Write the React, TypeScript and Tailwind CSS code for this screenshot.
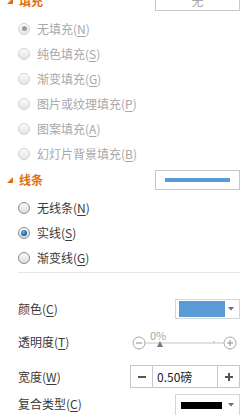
import React from "react";

type RS = "dis" | "dis-on" | "off" | "on";

function Radio({ s }: { s: RS }) {
  if (s === "dis" || s === "dis-on") {
    return (
      <div className="w-[12px] h-[12px] rounded-full border border-[#d2d2d2] bg-gradient-to-b from-[#fbfbfb] to-[#e4e4e4] flex items-center justify-center shrink-0">
        {s === "dis-on" && <div className="w-[5px] h-[5px] rounded-full bg-[#9c9c9c]" />}
      </div>
    );
  }
  return (
    <div className="w-[12px] h-[12px] rounded-full border border-[#8a8a8a] bg-gradient-to-b from-[#fdfdfd] to-[#dcdcdc] flex items-center justify-center shrink-0">
      {s === "on" && (
        <div className="w-[6px] h-[6px] rounded-full bg-[radial-gradient(circle_at_40%_35%,#5fc0f0,#0b5a99_70%,#083e6c)]" />
      )}
    </div>
  );
}

function Label({ text, k, dis }: { text: string; k: string; dis?: boolean }) {
  return (
    <span className={dis ? "text-[#a8a8a8]" : "text-[#3a3a3a]"}>
      {text}(<span className="underline underline-offset-2">{k}</span>)
    </span>
  );
}

function Header({ title, children }: { title: string; children: React.ReactNode }) {
  return (
    <div className="flex items-center h-[20px] pl-[7px] pr-[8px]">
      <svg width="6" height="6" viewBox="0 0 6 6" className="shrink-0">
        <polygon points="6,0 6,6 0,6" fill="#e46c0a" />
      </svg>
      <span className="ml-[6px] text-[12px] font-bold text-[#e46c0a]">{title}</span>
      <div className="ml-auto w-[85px] h-[20px] border border-[#c8c8c8] bg-white flex items-center justify-center">
        {children}
      </div>
    </div>
  );
}

function RadioRow({ s, text, k }: { s: RS; text: string; k: string }) {
  return (
    <div className="flex items-center h-[25px] pl-[18px] gap-[7px]">
      <Radio s={s} />
      <Label text={text} k={k} dis={s === "dis" || s === "dis-on"} />
    </div>
  );
}

function Arrow() {
  return (
    <svg width="6" height="4" viewBox="0 0 6 4" className="shrink-0">
      <polygon points="0,0 6,0 3,3.5" fill="#6b6b7a" />
    </svg>
  );
}

export default function App() {
  return (
    <div
      className="w-[248px] h-[415px] overflow-hidden bg-white text-[12px] leading-none"
      style={{ fontFamily: '"Noto Sans CJK SC", "Noto Sans", sans-serif' }}
    >
      <div className="-mt-[9px]">
        <Header title="填充">
          <span className="text-[#a8a8a8]">无</span>
        </Header>
        <div className="mt-[5px]">
          <RadioRow s="dis-on" text="无填充" k="N" />
          <RadioRow s="dis" text="纯色填充" k="S" />
          <RadioRow s="dis" text="渐变填充" k="G" />
          <RadioRow s="dis" text="图片或纹理填充" k="P" />
          <RadioRow s="dis" text="图案填充" k="A" />
          <RadioRow s="dis" text="幻灯片背景填充" k="B" />
        </div>
        <div className="mt-[4px]">
          <Header title="线条">
            <div className="w-[65px] h-[4px] bg-[#5b9bd5]" />
          </Header>
        </div>
        <div className="mt-[5px]">
          <RadioRow s="off" text="无线条" k="N" />
          <RadioRow s="on" text="实线" k="S" />
          <RadioRow s="off" text="渐变线" k="G" />
        </div>
        <div className="mt-[2px] ml-[18px] mr-[8px] h-px bg-[#e6e6e6]" />

        <div className="mt-[26px] flex items-center h-[20px] pl-[18px] pr-[8px]">
          <Label text="颜色" k="C" />
          <div className="ml-auto w-[65px] h-[20px] border border-[#d6d6d6] flex items-center pl-[3px] pr-[5px]">
            <div className="w-[46px] h-[16px] bg-[#5b9bd5]" />
            <div className="ml-auto">
              <Arrow />
            </div>
          </div>
        </div>

        <div className="mt-[11px] flex items-center h-[24px] pl-[18px] pr-[8px]">
          <Label text="透明度" k="T" />
          <div className="ml-auto relative w-[110px] h-[24px]">
            <svg width="110" height="24" viewBox="0 0 110 24" className="absolute left-0 top-0">
              <circle cx="9" cy="13" r="6" fill="none" stroke="#a6a6a6" strokeWidth="1" />
              <line x1="6" y1="13" x2="12" y2="13" stroke="#8a8a8a" strokeWidth="1" />
              <line x1="15" y1="13" x2="94" y2="13" stroke="#c4c4c4" strokeWidth="1" />
              <line x1="84" y1="11" x2="84" y2="13" stroke="#b0b0b0" strokeWidth="1" />
              <circle cx="100" cy="13" r="6" fill="none" stroke="#a6a6a6" strokeWidth="1" />
              <line x1="97" y1="13" x2="103" y2="13" stroke="#8a8a8a" strokeWidth="1" />
              <line x1="100" y1="10" x2="100" y2="16" stroke="#8a8a8a" strokeWidth="1" />
              <polygon points="30,11 33,17 27,17" fill="#7a7a7a" />
            </svg>
            <span className="absolute left-[20px] top-0 text-[11px] text-[#a8a8a8]">0%</span>
          </div>
        </div>

        <div className="mt-[11px] flex items-center h-[23px] pl-[18px] pr-[8px]">
          <Label text="宽度" k="W" />
          <div className="ml-auto w-[110px] h-[23px] border border-[#c8c8c8] flex items-stretch">
            <div className="w-[22px] flex items-center justify-center border-r border-[#c8c8c8] text-[#444] font-bold">
              <div className="w-[8px] h-[2px] bg-[#555]" />
            </div>
            <div className="flex-1 flex items-center pl-[4px] text-[#222]">0.50磅</div>
            <div className="w-[22px] flex items-center justify-center border-l border-[#c8c8c8]">
              <div className="relative w-[8px] h-[8px]">
                <div className="absolute left-0 top-[3px] w-[8px] h-[2px] bg-[#555]" />
                <div className="absolute left-[3px] top-0 w-[2px] h-[8px] bg-[#555]" />
              </div>
            </div>
          </div>
        </div>

        <div className="mt-[6px] flex items-center h-[20px] pl-[18px] pr-[8px]">
          <Label text="复合类型" k="C" />
          <div className="ml-auto w-[65px] h-[22px] border border-[#d6d6d6] flex items-center pl-[5px] pr-[5px] self-start">
            <div className="w-[41px] h-[7px] bg-black" />
            <div className="ml-auto">
              <Arrow />
            </div>
          </div>
        </div>
      </div>
    </div>
  );
}
